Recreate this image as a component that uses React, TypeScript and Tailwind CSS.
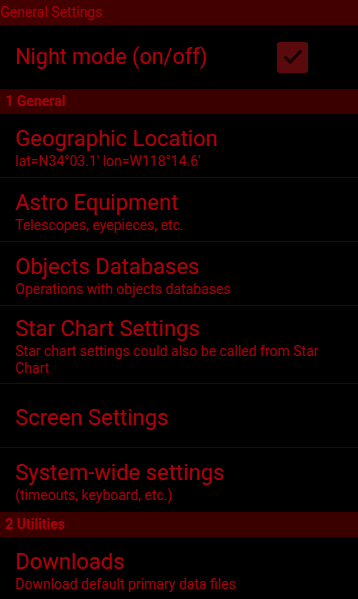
import React from 'react';

type Item = { title: string; summary?: string };

function Header({ label, className = '' }: { label: string; className?: string }) {
  return (
    <div className={`h-[25px] bg-[#3a0000] flex items-center text-[14px] font-bold text-[#a8000c] ${className}`}>
      {label}
    </div>
  );
}

function Row({ title, summary, last }: Item & { last?: boolean }) {
  return (
    <div className={`flex flex-col justify-center px-[15px] min-h-[64px] pt-[10px] pb-[6px] ${last ? '' : 'border-b border-[#3a0010]'}`}>
      <div className="text-[22px] leading-[26px] text-[#b0000c]">{title}</div>
      {summary && <div className="text-[14px] leading-[17px] text-[#a8000c] mt-[1px] pr-[20px]">{summary}</div>}
    </div>
  );
}

export default function App() {
  const general: Item[] = [
    { title: 'Geographic Location', summary: "lat=N34°03.1' lon=W118°14.6'" },
    { title: 'Astro Equipment', summary: 'Telescopes, eyepieces, etc.' },
    { title: 'Objects Databases', summary: 'Operations with objects databases' },
    { title: 'Star Chart Settings', summary: 'Star chart settings could also be called from Star Chart' },
    { title: 'Screen Settings' },
    { title: 'System-wide settings', summary: '(timeouts, keyboard, etc.)' },
  ];

  return (
    <div className="w-[358px] h-[599px] overflow-hidden bg-black" style={{ fontFamily: 'Roboto, "Noto Sans", sans-serif' }}>
      <Header label="General Settings" className="bg-[#420000] font-normal" />
      <div className="h-[64px] flex items-center justify-between pl-[15px] pr-[50px]">
        <div className="text-[21.5px] text-[#b0000c]">Night mode (on/off)</div>
        <div className="w-[31px] h-[31px] rounded-[3px] bg-[#5a0a0c] flex items-center justify-center">
          <svg width="22" height="22" viewBox="0 0 24 24">
            <path d="M4 12.5l5 5L20 6" fill="none" stroke="#140000" strokeWidth="3.2" strokeLinecap="square" />
          </svg>
        </div>
      </div>
      <Header label="1 General" className="pl-[5px]" />
      {general.map((it, i) => (
        <Row key={it.title} {...it} last={i === general.length - 1} />
      ))}
      <Header label="2 Utilities" className="pl-[5px]" />
      <Row title="Downloads" summary="Download default primary data files" last />
    </div>
  );
}
